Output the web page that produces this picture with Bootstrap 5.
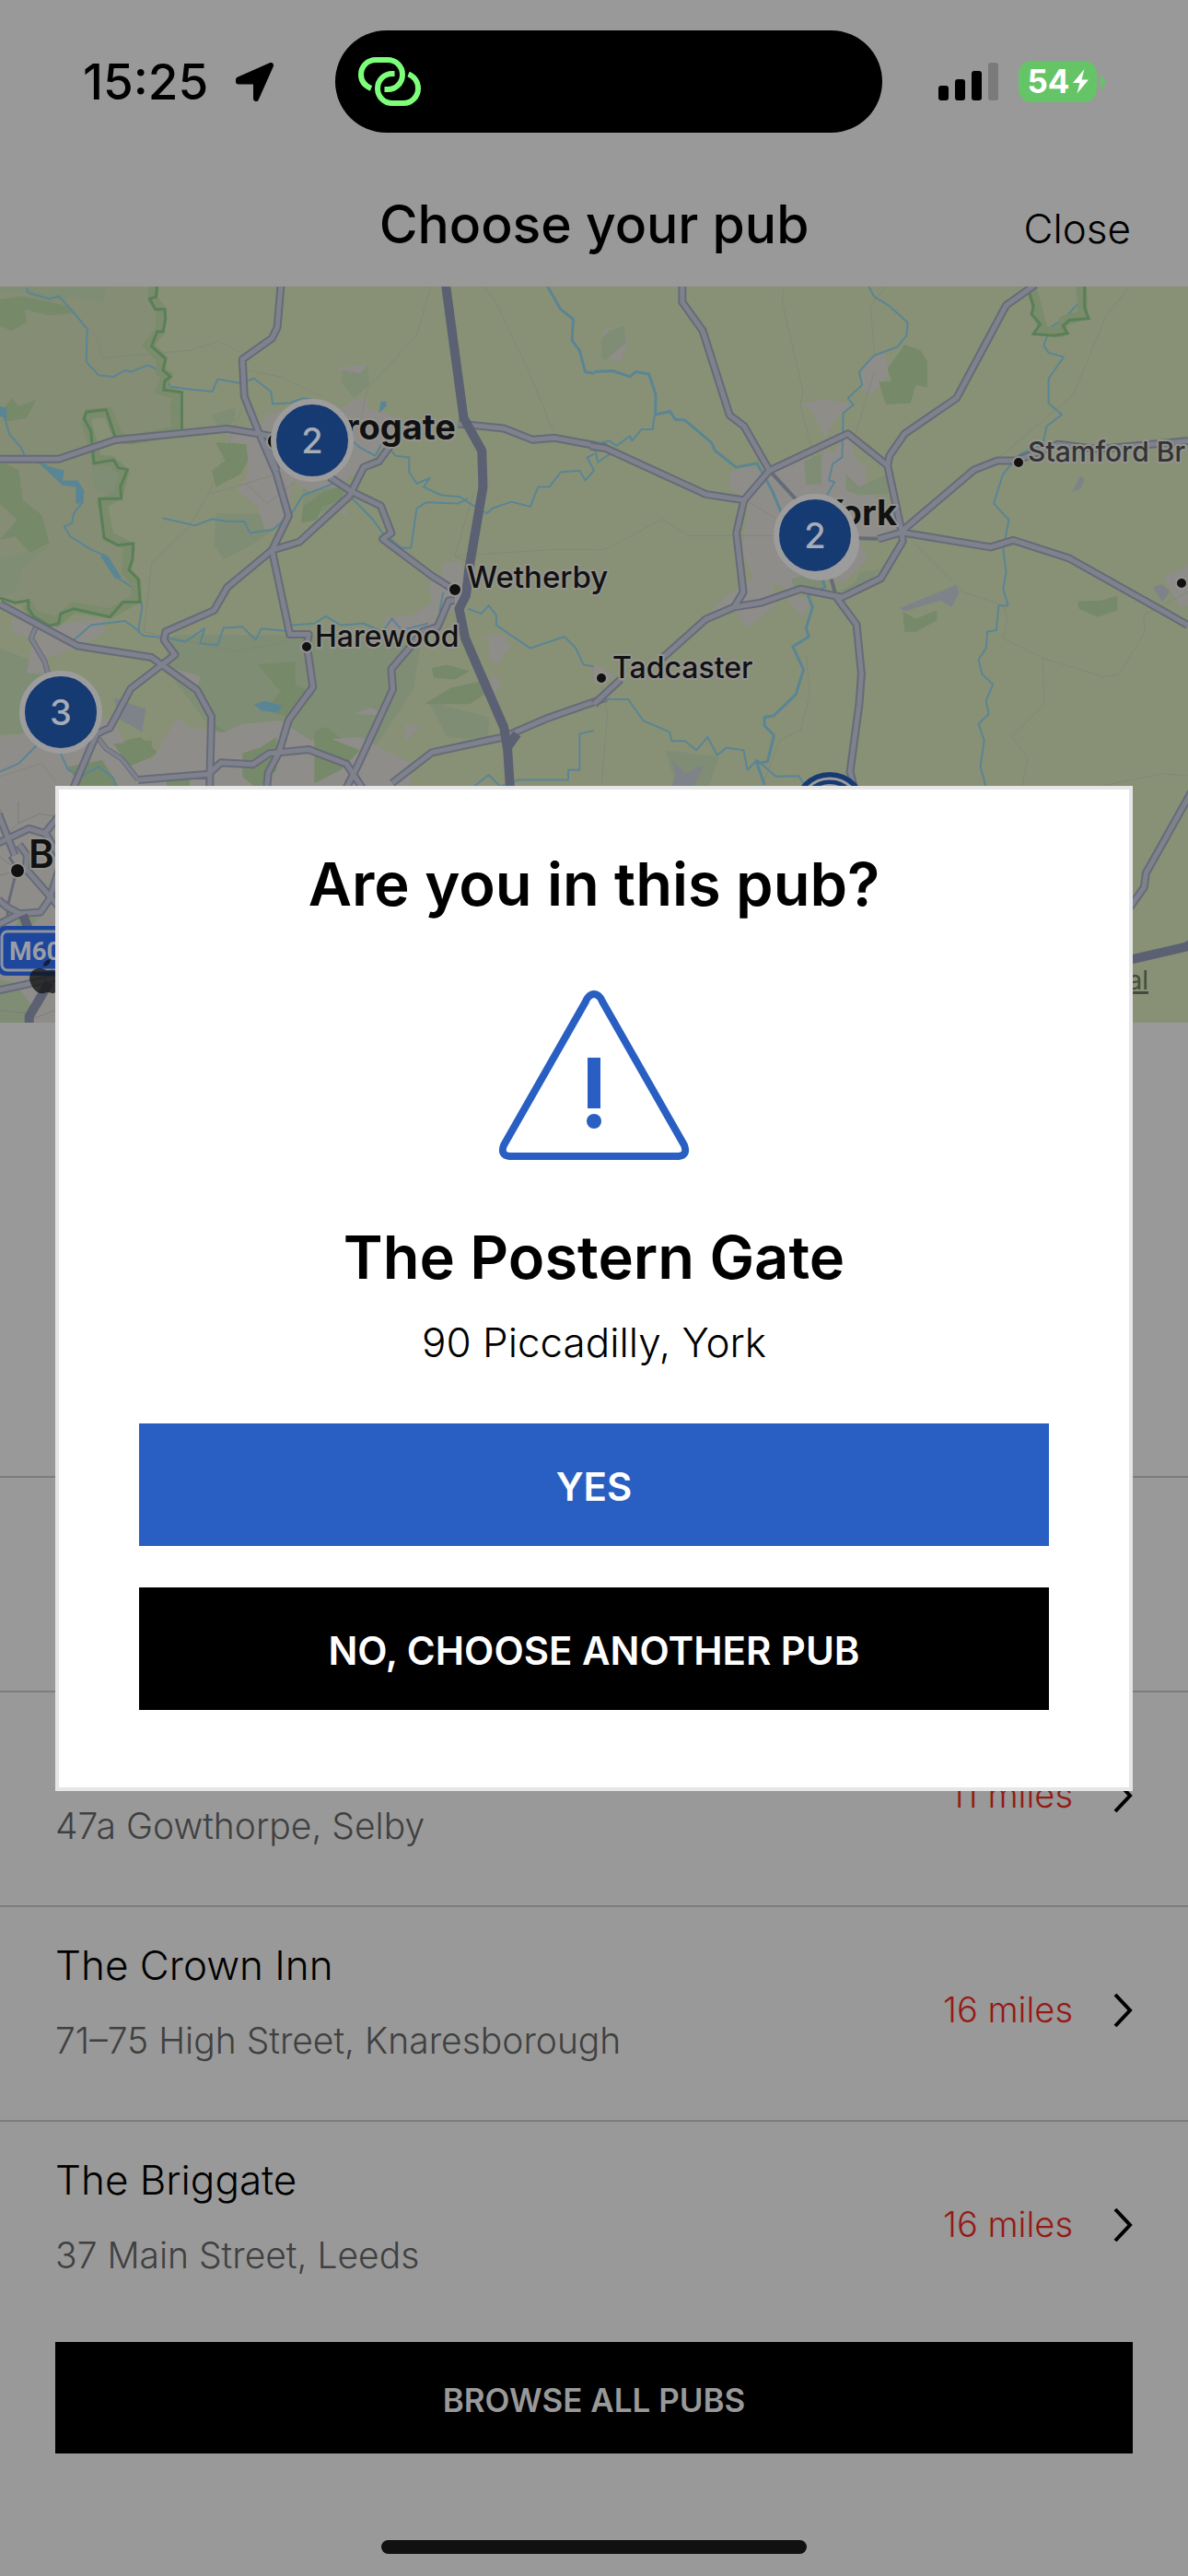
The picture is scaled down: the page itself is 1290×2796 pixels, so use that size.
<!DOCTYPE html>
<html lang="en">
<head>
<meta charset="utf-8">
<meta name="viewport" content="width=device-width, initial-scale=1">
<title>Choose your pub</title>
<link href="https://cdn.jsdelivr.net/npm/bootstrap@5.3.0/dist/css/bootstrap.min.css" rel="stylesheet">
<style>
  body { background: #999; color: #000; font-family: Inter, "Liberation Sans", sans-serif; }

  /* status bar */
  .status { padding: 33px 90px 0; }
  .status-left { width: 212px; gap: 30px; font-size: 53px; font-weight: 500; line-height: 60px; }
  .island { width: 594px; height: 111px; border-radius: 56px; background: #000; padding-left: 25px; }
  .status-right { gap: 22px; }
  .battery { width: 85px; height: 45px; border-radius: 14px; background: #65c466; color: #fff; font-size: 35px; font-weight: 700; line-height: 45px; gap: 3px; }

  /* header */
  .pub-header { display: grid; grid-template-columns: 1fr auto 1fr; padding: 65px 62px 32px; }
  .pub-title { grid-column: 2; font-size: 57px; font-weight: 500; line-height: 70px; }
  .close-link { justify-self: end; font-size: 44px; font-weight: 300; line-height: 60px; }

  /* map */
  .map-area path, .map-area polygon { vector-effect: non-scaling-stroke; }
  .map-area svg { display: block; width: 100%; height: auto; }
  .casing { fill: none; stroke: #666b78; stroke-width: 9; stroke-linejoin: round; }
  .roadfill { fill: none; stroke: #7f828d; stroke-width: 5; stroke-linejoin: round; }
  .motor { fill: none; stroke: #5b6073; stroke-width: 10; stroke-linejoin: round; }
  .river { fill: none; stroke: #5a8595; stroke-width: 2; stroke-linejoin: round; }
  .minor { fill: none; stroke: #808878; stroke-width: 1; }
  .urban { fill: #8f8d89; }
  .wood { fill: #768969; }
  .park { fill: #7f8d74; }
  .lake { fill: #5a8595; }
  .edge { fill: none; stroke: #5a7f58; stroke-width: 3; }
  .edge-soft { fill: none; stroke: #7a8c6b; stroke-width: 11; }
  .place { font-weight: 500; fill: #111; stroke: #94938f; stroke-width: 4; paint-order: stroke; stroke-linejoin: round; }
  .pin-count { font-size: 38px; font-weight: 500; fill: #a7acb6; text-anchor: middle; }

  /* list */
  .search-space { height: 492px; }
  .pub-row { min-height: 233px; border-top: 2px solid #7d7d7d; padding: 0 60px; color: #000; }
  .pub-text { padding: 33px 0 60px; gap: 26px; }
  .pub-name { font-size: 44px; font-weight: 300; line-height: 60px; }
  .pub-address { font-size: 39px; font-weight: 300; line-height: 52px; color: #404040; }
  .pub-distance { gap: 44px; font-size: 38px; font-weight: 300; color: #941a16; }
  .browse { margin: 8px 60px 0; padding-top: 12px; height: 121px; font-size: 35px; font-weight: 600; color: #999; background: #000; }
  .home-bar { width: 462px; height: 15px; border-radius: 8px; background: #111; margin-bottom: 24px; }

  /* dialog */
  .pub-modal { --bs-modal-width: 1170px; --bs-modal-margin: 60px; }
  .pub-modal .modal-content { border: 4px solid #e6e6e6; border-radius: 0; color: #000; padding: 63px 87px 84px; }
  .dialog-title { font-size: 65px; font-weight: 600; line-height: 80px; }
  .dialog-icon { margin: 75px auto 66px; }
  .dialog-address { font-size: 44px; font-weight: 300; line-height: 60px; margin: 22px 0 58px; }
  .dialog-actions { gap: 45px; }
  .dialog-btn { height: 133px; padding-top: 10px; font-size: 42px; font-weight: 600; color: #fff; }
  .btn-yes { background: #295fc2; }
  .btn-no { background: #000; }
</style>
<script src="https://cdn.jsdelivr.net/npm/bootstrap@5.3.0/dist/js/bootstrap.bundle.min.js"></script>
</head>
<body class="d-flex flex-column min-vh-100">

<div class="status d-flex align-items-center justify-content-between">
  <div class="status-left d-flex align-items-center">
    <span>15:25</span>
    <svg width="42" height="42" viewBox="0 0 42 42" aria-hidden="true"><path d="M3 18.500 38 3 22 39V20.500H3Z" fill="#000" stroke="#000" stroke-width="6" stroke-linejoin="round"/></svg>
  </div>
  <div class="island d-flex align-items-center">
    <svg width="68" height="53" viewBox="0 0 68 53" fill="none" stroke="#7dff7a" stroke-width="6" aria-hidden="true">
      <path d="M14 34C7 31 3 26 3 19C3 10 10 3 19 3H32C41 3 48 10 48 19C48 28 41 35 32 35H28.500"/>
      <path d="M39.500 18H37C28 18 21 25 21 34C21 43 28 50 37 50H49C58 50 65 43 65 34C65 27 61 21 54.500 18.500"/>
    </svg>
  </div>
  <div class="status-right d-flex align-items-center">
    <svg width="65" height="41" viewBox="0 0 65 41" aria-hidden="true"><rect y="25" width="11" height="16" rx="3"/><rect x="18" y="18" width="11" height="23" rx="3"/><rect x="36" y="9" width="11" height="32" rx="3"/><rect x="54" width="11" height="41" rx="3" fill="#7a7a7a"/></svg>
    <div class="d-flex align-items-center">
      <div class="battery d-flex align-items-center justify-content-center"><span>54</span>
        <svg width="17" height="27" viewBox="0 0 17 27" aria-hidden="true"><path d="M12.500 0 0 15H7.500L4.500 26.500 17 11.500H9.500Z" fill="#fff"/></svg>
      </div>
      <svg width="9" height="14" viewBox="0 0 9 14" aria-hidden="true"><path d="M4 0Q9 2 9 7T4 14Z" fill="#65c466"/></svg>
    </div>
  </div>
</div>

<header class="pub-header align-items-baseline">
  <h1 class="pub-title mb-0">Choose your pub</h1>
  <a href="#" class="close-link text-black text-decoration-none">Close</a>
</header>

<div class="map-area">
<svg viewBox="0 0 1290 799" font-family="Inter, 'Liberation Sans', sans-serif" role="img" aria-label="Map of pubs around York">
  <defs>
    <path id="roads-west" d="M742 20 732 155 718 188 640 252 645 365 685 480 730 600 762 728 718 832 600 945 565 1015 437 1080 433 1105 462 1150 345 1253 290 1372 255 1390 188 1570M0 555H155L305 497 600 463 690 480 735 490M730 590 700 500M870 610 930 655 1005 697 1033 780 1010 798 1140 910 1195 950M718 832 790 807 922 668 960 580 1000 562 1030 515M718 832 765 1088H815L810 1120 826 1248 762 1348 735 1450 708 1508 703 1570M0 996 205 1123 400 1158 520 1257 558 1337 553 1570M1200 985H1185L1155 1065 1115 1080 1080 1130 1033 1193 1037 1255 947 1480 912 1560M365 1530 550 1513 583 1478 668 1483 710 1450 815 1438 915 1482 965 1570M1210 448 1330 462 1405 496 1465 491 1600 520M1035 1540 1140 1447 1330 1400 1440 1345 1600 1280"/>
    <path id="roads-east" d="M233 20V78L287 165 358 422 396 455 463 590 396 680 376 780 394 960 370 1005 295 1042 180 1160M70 1225 0 1300M-10 515 30 522 295 662 396 680M463 590 670 478 775 575 812 775 815 805 757 918 655 975 545 950 440 992 370 1005M1165 25 1088 88 957 370 820 478 780 545 775 575M812 775 1003 588 1065 560H1115L1225 510 1330 525 1568 500M750 798 812 778 1047 823 1107 802 1255 857 1568 1060M640 975 693 1058 706 1208 700 1300 676 1505 690 1570"/>
    <path id="roads-far" d="M1600 240 1457 545 1452 590 1410 660"/>
    <path id="roads-city" d="M-5 100 48 235M-5 195 95 148 150 165 200 250M190 110 140 170M62 200 88 235 85 280 190 400M200 260 160 380 132 420 65 425 25 405-5 380M-5 460 65 425M-5 675 180 635"/>
  </defs>
  <rect width="1290" height="799" fill="#889176"/>

  <g transform="translate(0 -11) scale(.41135 .35714)">
    <path fill="#858d74" d="M0 20H410L395 70 435 100 430 170 400 212 437 250 435 345 480 355 478 480 340 500 305 497 280 405 225 430 248 568 335 585 320 675 262 678 275 795 350 812 345 895 370 990 290 1035 160 1025 130 1060 75 1010 0 985Z"/>
    <path class="park" d="M0 30 280 30 270 80 190 60 130 80 60 50 0 50ZM905 280 970 265 975 330 935 370 900 320ZM560 420 620 400 620 440 580 465ZM570 720 690 720 735 760 660 820 590 860 565 815ZM0 860 130 820 60 880 40 960 0 970ZM460 1090 1040 1090 1110 1120 1090 1260 960 1480 760 1400 560 1380 430 1180ZM1130 1290 1290 1340 1290 1410 1180 1400ZM0 1130 130 1190 60 1390 0 1390ZM240 560 330 590 310 670 250 650ZM800 640 930 640 900 700 800 740Z"/>
    <path class="wood" d="M0 70 60 60 180 90 200 110 130 118 65 100 70 140 30 165 0 150ZM0 420 30 370 50 395 95 375 70 430 20 440ZM0 560 50 590 60 680 110 725 130 810 80 840 40 790 0 800 45 740 0 690ZM570 505 650 510 655 560 635 600 570 640 560 590 595 560ZM800 700 860 650 910 640 900 680 850 700 835 740 795 750ZM680 1180 780 1170 780 1240 830 1270 770 1340 700 1320 740 1260ZM1140 1190 1180 1180 1240 1200 1200 1225 1145 1220ZM1120 1300 1190 1250 1270 1230 1280 1270 1240 1300ZM290 1420 370 1400 420 1450 350 1480ZM550 1350 620 1400 620 1470 560 1490ZM830 1380 860 1370 945 1440 910 1490ZM180 1480 260 1470 340 1560 200 1570Z"/>
    <path class="urban" d="M600 475 700 440 700 420 740 410 900 400 950 370 970 370 970 400 1040 425 1040 480 990 545 940 600 880 640 820 655 770 620 765 720 740 760 700 770 680 700 625 650 655 600 650 510 600 500ZM1170 870 1215 865 1230 930 1215 1000 1160 1040 1110 1100 1015 1090 1015 1035 1090 1030 1140 990 1130 935 1165 920ZM1265 1095 1335 1090 1340 1120 1350 1120 1310 1180 1290 1165 1290 1110ZM30 1040 130 1060 270 1040 280 1080 200 1130 120 1160 130 1210 70 1205 80 1140 100 1100 35 1085ZM450 1190 530 1215 515 1265ZM0 1400 60 1390 240 1400 280 1340 310 1370 340 1440 400 1470 470 1340 500 1370 590 1385 640 1360 740 1350 820 1410 950 1400 1085 1480 1085 1570H0ZM885 280 975 265 950 295ZM935 1330 980 1310 1020 1335ZM1070 1360 1110 1370 1070 1415ZM890 710 915 705 915 730ZM1295 1200 1325 1240 1300 1270Z"/>
    <path fill="#7e838a" d="M300 1280 385 1315 375 1385 315 1345Z"/>
    <path class="wood" d="M570 505 650 510 655 560 635 600 570 640 560 590 595 560ZM640 1450 690 1430 730 1400 730 1500 680 1560 640 1520ZM830 1385 950 1440 900 1500 830 1540ZM440 1510 500 1510 500 1550 440 1570ZM300 1420 400 1410 400 1460 340 1490ZM180 1490 270 1470 320 1560 210 1550Z"/>
    <path class="minor" d="M150 70 255 180 270 248 500 225 577 198 635 230M1140 20 1100 180 970 340 950 450M1270 20 1310 80 1400 300 1460 470M650 285 740 305 850 365M400 870 380 1080 620 1140 760 1110M560 430 615 470M400 870 500 760 555 650 640 400M555 660 650 630 705 690 780 625M1200 850 1460 830 1568 830M1250 660 1200 850 1240 870M0 1520 110 1480 150 1540M650 630 730 600"/>
    <path class="river" d="M70 35 75 50 130 68 155 60 195 110 230 160 228 260 260 300 300 305 330 285 345 290 390 270 430 290 450 335 500 343 560 350 575 312 635 325 670 310 715 350 720 388 765 385 800 370 850 380M430 735 515 757 560 737 600 745 645 745 660 780 720 770 770 720 800 665 880 630M930 500 950 520 990 545 1010 505 1045 545 1080 550 1080 595 1100 630 1135 612 1118 640 1165 665 1215 670 1240 690 1285 720 1300 705 1350 685 1400 700 1420 640 1450 640 1480 595 1530 590 1545 620 1568 590 1550 550 1568 540M1235 675 1210 690 1125 687 1100 705 1085 825 1060 825 1010 780 985 740 930 675M10 420 25 480 55 520 70 555 125 575M215 690 195 720 190 750 170 760 185 790 240 830 280 850 310 915 368 960 375 1005 365 1080 380 1092 445 1100 490 1110 540 1070 528 1115 575 1120 590 1068 640 1065 675 1105 690 1070 760 1078 770 1060 830 1055 860 1033 900 1060 960 1055 1010 1080 1035 1040 1060 1075 1130 1055M195 1105 240 1060 330 1047 370 1080M1235 1010 1270 1025 1290 1000 1310 1030 1310 1060 1400 1130 1490 1095 1520 1130 1540 1180 1568 1185M1170 960 1160 1020M0 1505 50 1480 110 1410M160 1450 180 1500 215 1520 260 1490 300 1525 310 1570M1230 1570 1290 1515 1320 1550 1370 1530 1500 1530 1500 1500 1530 1500 1530 1390 1568 1380"/>
    <path class="river" style="stroke-width:3" d="M1445 30 1480 100 1513 130 1510 195 1530 225 1545 290 1568 295"/>
    <path class="lake" d="M105 570 170 590 165 620 205 620 222 650 220 690 200 690 200 640 165 635ZM0 395 18 400 18 430 0 425ZM265 850 285 850 320 915 305 920ZM670 1300 700 1290 745 1305 735 1325 690 1320ZM1005 380 1020 380 1020 395 1000 415Z"/>
    <path class="edge-soft" d="M407 30 403 68 427 105 423 165 392 210 428 250 425 290 440 300 425 345 470 360 462 400 468 470 345 497 312 490 285 413 235 418 228 440 256 560 292 560 327 595 312 665 270 690 287 790 340 820 335 895 360 930 360 980 290 1025 195 1005 150 1050 90 1030 70 995"/>
    <path class="edge" d="M415 20 412 62 395 68 410 100 435 100 437 130 430 168 415 168 400 212 437 250 430 285 450 305 435 318 432 345 480 352 480 480 345 502 305 492 280 405 228 412 222 432 240 470 248 568 300 558 312 582 336 587 318 640 320 675 262 676 275 795 310 817 352 812 350 860 340 892 365 920 370 990 325 990 290 1035 195 1010 160 1025 155 1055 130 1062 90 1035 75 1010 75 985 40 992 0 978"/>
    <path class="casing" style="stroke-width:6" d="M95 1065 82 1100 118 1170 130 1220M250 1390 280 1435 320 1465 365 1530"/>
    <path class="roadfill" style="stroke-width:4" d="M95 1065 82 1100 118 1170 130 1220M250 1390 280 1435 320 1465 365 1530"/>
    <use href="#roads-west" class="casing"/><use href="#roads-west" class="roadfill"/>
    <path class="motor" d="M1176 20 1224 430 1272 530 1275 640 1238 890 1230 970 1212 1010 1228 1100 1330 1370 1340 1440 1348 1580M1365 1390 1340 1430"/>
  </g>

  <g transform="translate(645 -11) scale(.41135 .35714)">
    <path class="urban" d="M540 390 600 373 670 385 675 400 640 430 610 490 575 405ZM705 280 735 240 770 235 778 300 730 360 705 340ZM358 600 400 580 440 590 530 540 600 560 610 520 630 540 660 490 680 500 690 550 720 580 715 620 760 700 800 700 800 740 870 745 840 770 700 800 720 860 660 930 600 920 530 960 470 930 480 1000 400 1070 370 1000 290 1040 340 980 420 920 390 830 400 760 410 680 360 650ZM510 980 540 970 570 990 550 1035ZM25 160 70 155 90 200 70 260 20 245ZM1505 915 1568 880V1000L1545 1005ZM40 1200 0 1180 0 1240 50 1220Z"/>
    <path class="park" d="M20 190 40 165 80 150 85 200 30 255 20 250ZM665 600 700 640 740 620 775 600 775 660 700 665 665 650ZM520 920 580 900 610 920 600 950 530 950ZM700 900 760 890 700 950 640 960 690 930ZM190 1440 330 1460 300 1560 220 1570ZM555 560 600 540 600 630 560 635Z"/>
    <path class="wood" d="M820 208 862 225 880 260 880 338 850 330 835 385 770 390 752 320 785 320 775 280ZM815 1020 850 1040 905 1015 905 1045 850 1080 820 1080ZM1277 988 1340 985 1382 970 1380 1015 1330 1035 1280 1010Z"/>
    <path fill="#7e838a" d="M808 1008 955 938 965 960 945 1005 915 985 820 1018ZM1283 606 1295 615 1285 645 1262 655ZM1475 945 1500 935 1520 960 1500 990ZM207 1470 240 1510 290 1485 255 1570H197L215 1520Z"/>
    <path class="minor" d="M500 40 497 80 552 350 545 390 600 640M770 30 730 90 740 240M740 290 690 480M1410 35 1350 125 1265 360 1060 560M0 832 30 830 180 738 250 788 480 788M400 680 480 735M820 780 975 960 1080 1000 1090 1040 1080 1100 1185 1160 1345 1217 1385 1210 1455 1080 1450 1030 1568 960M1185 1160 1188 1300 1103 1398 1145 1465 1130 1550M560 1150 570 1270 545 1380 490 1410 450 1530M20 1230 35 1330 20 1540"/>
    <path class="river" d="M725 30 740 62 780 90 828 140 825 180 800 215 740 240 725 258 700 290 708 330 670 370 685 390 658 415 655 550 630 570 620 620 635 625 615 665M1275 30 1280 80 1240 130 1205 155 1187 210 1200 232 1240 245 1200 310 1200 385 1235 420 1195 455 1185 510 1125 540 1080 600 1055 690 1095 740 1080 830 1088 900 1080 950 1093 1000 1068 1000 1062 1075 1038 1080 1035 1130 1015 1165 1025 1210 1053 1240 1035 1290 1042 1330 1015 1360 1030 1410 1020 1490 1037 1560M160 420 155 465 125 465 100 500 95 485 60 515 40 500 0 510 10 565 60 525M0 1285H90L130 1350 200 1385 205 1412 240 1412 270 1440 300 1400 325 1455 350 1432 395 1440 405 1500 430 1470 480 1520 540 1518 570 1570"/>
    <path class="river" style="stroke-width:3" d="M0 290 50 287 95 305 110 290 145 297 163 360 162 420 200 410 215 435 240 437 310 505 320 530 375 580 430 568 470 650 495 720M600 910 610 945 565 970 577 1005 560 1070 567 1095 525 1125 553 1195 533 1270 475 1335 450 1340 450 1365 475 1395 458 1475 430 1480 450 1545"/>
    <path class="edge-soft" d="M1155 35 1175 120 1185 165 1230 170 1240 135 1290 118 1288 30"/>
    <path class="edge" d="M1145 35 1160 90 1155 115 1178 145 1160 175 1215 180 1250 173 1238 150 1255 133 1306 128 1295 95V30"/>
    <path class="casing" style="stroke-width:4" d="M463 590 535 680M680 795 750 797M625 915 640 975"/>
    <use href="#roads-east" class="casing"/><use href="#roads-east" class="roadfill"/>
  </g>

  <g transform="translate(645 449) scale(.41135 .34439)">
    <use href="#roads-far" class="casing"/><use href="#roads-far" class="roadfill"/>
    <path class="motor" d="M1600 755 1560 778 1400 822"/>
    <path class="minor" d="M1340 270 1500 232 1568 238"/>
  </g>

  <g transform="translate(0 539) scale(.33333)">
    <path class="urban" d="M0 0H200V790H0Z"/>
    <path class="park" d="M60 440 135 435 80 480 50 475ZM0 640 50 650 100 720 85 790H0Z"/>
    <path class="minor" style="stroke:#7d7d7c" d="M0 85 30 160 60 130V60M60 130 130 100 190 110M0 240 60 285 0 300M100 770 180 740M0 740 90 750"/>
    <path class="casing" style="stroke-width:3" d="M30 240 55 280 25 400V440"/>
    <use href="#roads-city" class="casing"/><use href="#roads-city" class="roadfill"/>
    <path class="motor" d="M75 430 95 480M160 650 95 760V800"/>
  </g>

  <text class="place" x="495" y="166" font-size="38" text-anchor="end" style="font-weight:700">Harrogate</text>
  <text class="place" x="974" y="259" font-size="38" text-anchor="end" style="font-weight:700">York</text>
  <text class="place" x="507" y="327" font-size="33">Wetherby</text>
  <text class="place" x="342" y="391" font-size="32">Harewood</text>
  <text class="place" x="665" y="425" font-size="32">Tadcaster</text>
  <text class="place" x="1116" y="190" font-size="30" style="fill:#333">Stamford Br</text>
  <text class="place" x="31" y="631" font-size="42" style="font-weight:600">B</text>
  <g fill="#111" stroke="#94938f" stroke-width="2"><circle cx="299" cy="168" r="9"/><circle cx="494" cy="329" r="7"/><circle cx="333" cy="391" r="6"/><circle cx="653" cy="425" r="6"/><circle cx="1106" cy="191" r="6"/><circle cx="1283" cy="322" r="6"/><circle cx="19" cy="634" r="8"/></g>

  <rect x="-3" y="694" width="110" height="54" rx="9" fill="#1e469c"/>
  <rect x="2" y="700" width="110" height="42" rx="6" fill="none" stroke="#8f949e" stroke-width="3"/>
  <text x="10" y="731" font-size="28" font-weight="700" font-family="Roboto, sans-serif" fill="#9a9da6">M606</text>
  <path fill="#111" fill-opacity=".75" d="M55 742C61 741 66 743 66 755C65 763 60 768 56 767Q52 765 48 767C41 769 33 761 32 751C33 740 42 738 50 742ZM47 738Q47 731 55 730Q55 737 47 738Z"/>
  <a href="#"><text x="1247" y="763" font-size="28" fill="#454b3c" text-anchor="end" text-decoration="underline">Legal</text></a>

  <g stroke="#9c9c9c" stroke-width="6" fill="#163a72">
    <circle cx="891" cy="277" r="39" fill="#9c9c9c"/>
    <circle cx="339" cy="167" r="42"/><circle cx="885" cy="270" r="42"/><circle cx="66" cy="462" r="42"/>
  </g>
  <text class="pin-count" x="339" y="181">2</text><text class="pin-count" x="885" y="284">2</text><text class="pin-count" x="66" y="476">3</text>
  <circle cx="901" cy="567" r="40" fill="#163a72"/><circle cx="901" cy="567" r="33" fill="#163a72" stroke="#9c9c9c" stroke-width="3"/><circle cx="901" cy="567" r="27" fill="#9c9c9c"/>
</svg>
</div>

<div class="search-space"></div>
<main class="d-flex flex-column">
  <div class="pub-row"></div>
  <a href="#" class="pub-row d-flex align-items-center justify-content-between text-decoration-none">
    <span class="pub-text d-flex flex-column"><span class="pub-name">&nbsp;</span><span class="pub-address">47a Gowthorpe, Selby</span></span>
    <span class="pub-distance d-flex align-items-center pb-2">11 miles
      <svg width="21" height="36" viewBox="0 0 21 36" fill="none" stroke="#000" stroke-width="4" aria-hidden="true"><path d="M2 1 18 18 2 35"/></svg></span>
  </a>
  <a href="#" class="pub-row d-flex align-items-center justify-content-between text-decoration-none">
    <span class="pub-text d-flex flex-column"><span class="pub-name">The Crown Inn</span><span class="pub-address">71–75 High Street, Knaresborough</span></span>
    <span class="pub-distance d-flex align-items-center pb-2">16 miles
      <svg width="21" height="36" viewBox="0 0 21 36" fill="none" stroke="#000" stroke-width="4" aria-hidden="true"><path d="M2 1 18 18 2 35"/></svg></span>
  </a>
  <a href="#" class="pub-row d-flex align-items-center justify-content-between text-decoration-none">
    <span class="pub-text d-flex flex-column"><span class="pub-name">The Briggate</span><span class="pub-address">37 Main Street, Leeds</span></span>
    <span class="pub-distance d-flex align-items-center pb-2">16 miles
      <svg width="21" height="36" viewBox="0 0 21 36" fill="none" stroke="#000" stroke-width="4" aria-hidden="true"><path d="M2 1 18 18 2 35"/></svg></span>
  </a>
</main>
<button type="button" class="btn browse rounded-0 border-0">BROWSE ALL PUBS</button>
<div class="home-bar mt-auto mx-auto"></div>

<div class="modal pub-modal d-block" role="dialog" aria-modal="true" aria-labelledby="dialogTitle">
  <div class="modal-dialog modal-dialog-centered">
    <div class="modal-content text-center">
      <h2 class="dialog-title mb-0" id="dialogTitle">Are you in this pub?</h2>
      <svg class="dialog-icon" width="208" height="184" viewBox="0 0 208 184" aria-hidden="true">
        <path d="M98 7Q104 1 110 7Q112 9 113 12L202 168Q206 179 196 180H12Q2 179 6 168L95 12Q96 9 98 7Z" fill="none" stroke="#295fc2" stroke-width="8" stroke-linejoin="round"/>
        <path d="M97 73H111V128H97Z" fill="#295fc2"/><circle cx="104" cy="142" r="8" fill="#295fc2"/>
      </svg>
      <h3 class="dialog-title mb-0">The Postern Gate</h3>
      <p class="dialog-address">90 Piccadilly, York</p>
      <div class="dialog-actions d-flex flex-column">
        <button type="button" class="btn dialog-btn btn-yes rounded-0 border-0">YES</button>
        <button type="button" class="btn dialog-btn btn-no rounded-0 border-0">NO, CHOOSE ANOTHER PUB</button>
      </div>
    </div>
  </div>
</div>
</body>
</html>
